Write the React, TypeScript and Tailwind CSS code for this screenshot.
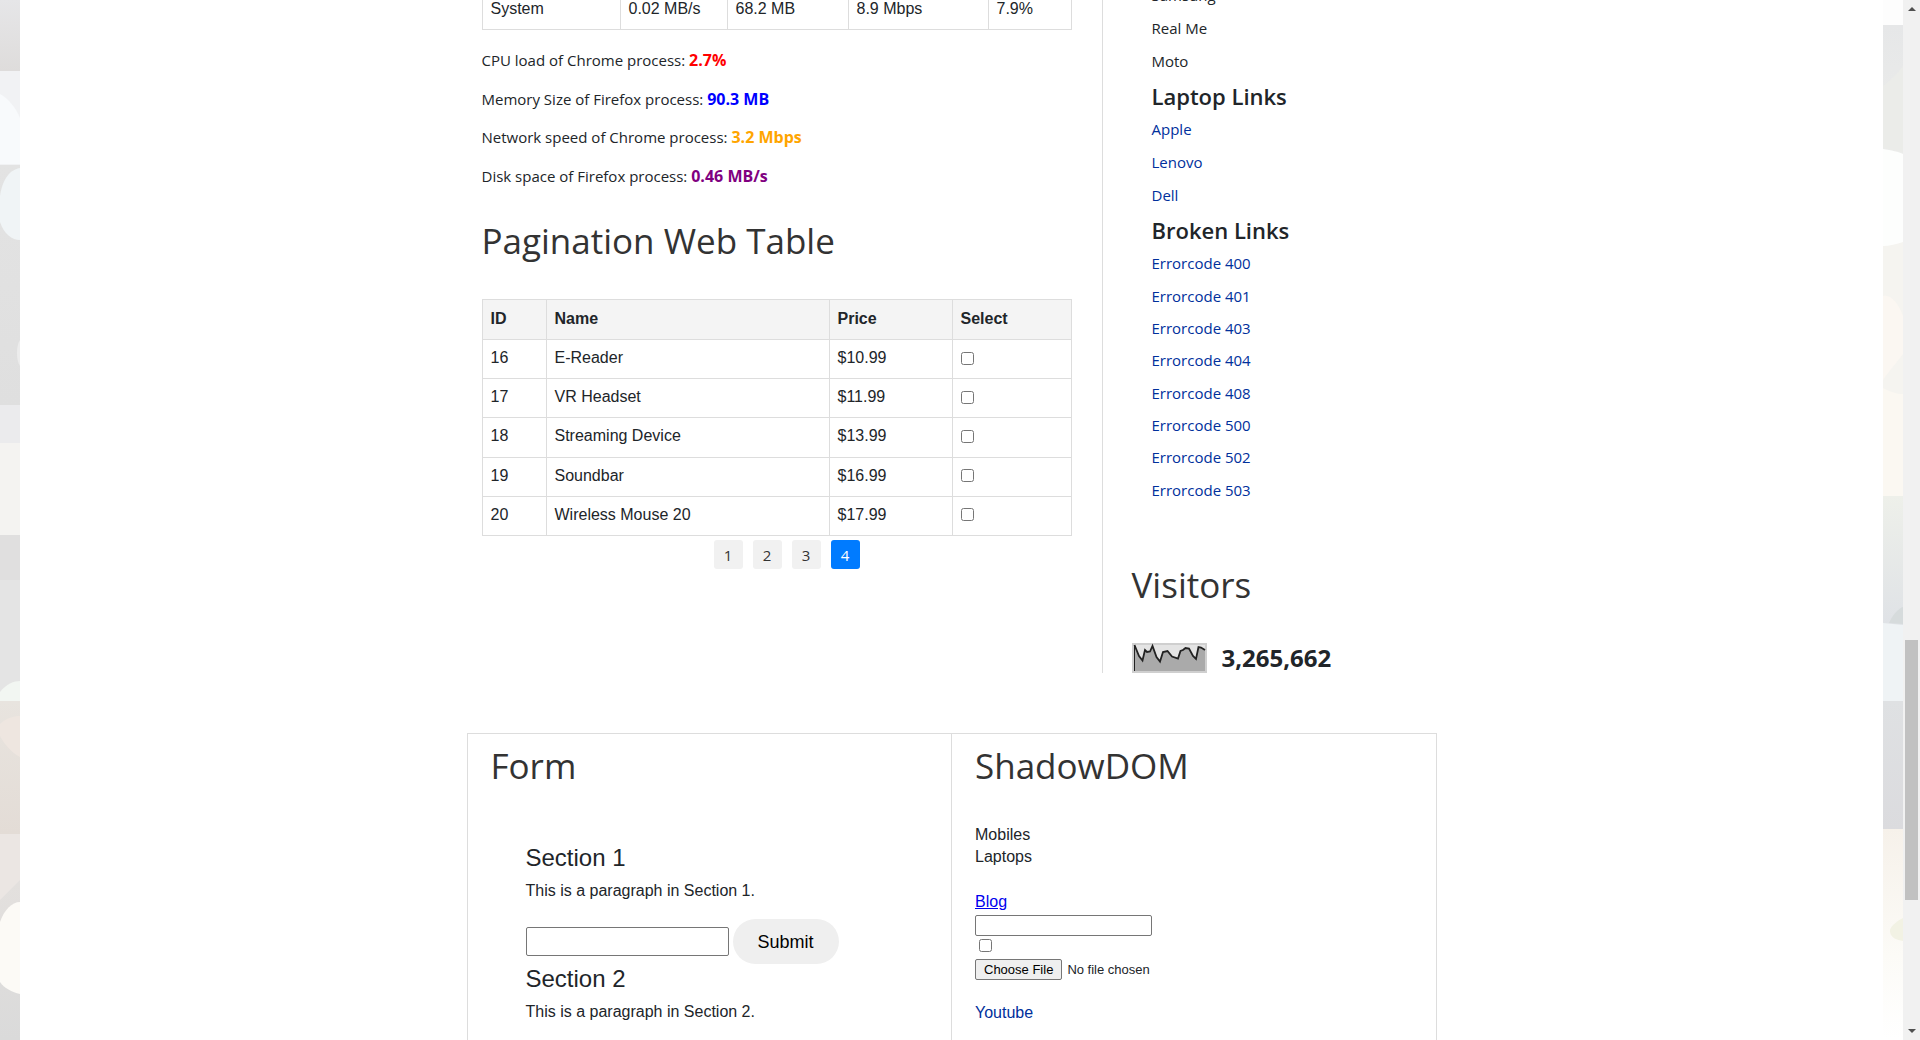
import React from "react";

const heading = "font-['Open_Sans',sans-serif] text-[35px] leading-[48px] text-[#333]";

const metrics = [
  { label: "CPU load of Chrome process:", value: "2.7%", color: "text-[#ff0000]" },
  { label: "Memory Size of Firefox process:", value: "90.3 MB", color: "text-[#0000ff]" },
  { label: "Network speed of Chrome process:", value: "3.2 Mbps", color: "text-[#ffa500]" },
  { label: "Disk space of Firefox process:", value: "0.46 MB/s", color: "text-[#800080]" },
];

const products = [
  { id: 16, name: "E-Reader", price: "$10.99" },
  { id: 17, name: "VR Headset", price: "$11.99" },
  { id: 18, name: "Streaming Device", price: "$13.99" },
  { id: 19, name: "Soundbar", price: "$16.99" },
  { id: 20, name: "Wireless Mouse 20", price: "$17.99" },
];

const errorCodes = [400, 401, 403, 404, 408, 500, 502, 503];

function LeftBackdrop() {
  return (
    <svg className="h-full w-5 shrink-0" viewBox="0 0 20 1040" preserveAspectRatio="none" aria-hidden="true">
      <defs>
        <linearGradient id="l1" x1="0" y1="0" x2="0" y2="1">
          <stop offset="0" stopColor="#e6e6e8" />
          <stop offset="1" stopColor="#dedcdb" />
        </linearGradient>
        <linearGradient id="l2" x1="0" y1="0" x2="0" y2="1">
          <stop offset="0" stopColor="#e3e3e3" />
          <stop offset="1" stopColor="#dfdfdf" />
        </linearGradient>
        <linearGradient id="l3" x1="0" y1="0" x2="0" y2="1">
          <stop offset="0" stopColor="#e8e4df" />
          <stop offset="1" stopColor="#e3dcd6" />
        </linearGradient>
        <linearGradient id="l4" x1="0" y1="0" x2="0" y2="1">
          <stop offset="0" stopColor="#e6e2df" />
          <stop offset="1" stopColor="#dadada" />
        </linearGradient>
      </defs>
      <rect width="20" height="71" fill="url(#l1)" />
      <rect y="71" width="20" height="95" fill="#f1f2f4" />
      <path d="M0 94C8 98 16 108 20 118V164H0Z" fill="#f8fafc" />
      <rect y="165" width="20" height="240" fill="url(#l2)" />
      <path d="M20 168C8 170 2 182 0 196V222C4 234 12 240 20 240Z" fill="#f0f4f6" />
      <path d="M20 340C16 346 16 360 20 366Z" fill="#ececec" />
      <rect y="405" width="20" height="38" fill="#ebebed" />
      <rect y="443" width="20" height="92" fill="#f4f3f1" />
      <rect y="535" width="20" height="45" fill="#e0dfdf" />
      <rect y="580" width="20" height="121" fill="#e4e4e4" />
      <path d="M0 692C6 684 14 681 20 681V701H0Z" fill="#f2f6f2" />
      <rect y="701" width="20" height="133" fill="url(#l3)" />
      <path d="M0 724C6 718 14 716 20 716V757C12 753 4 744 0 736Z" fill="#eee6e0" />
      <rect y="834" width="20" height="206" fill="url(#l4)" />
      <path d="M0 834H20V880L0 900Z" fill="#ebe6e3" />
      <path d="M0 922C4 910 12 902 20 902V994C12 992 4 988 0 982Z" fill="#fcfaf6" />
    </svg>
  );
}

function RightBackdrop() {
  return (
    <svg className="h-full w-5 shrink-0" viewBox="0 0 20 1040" preserveAspectRatio="none" aria-hidden="true">
      <defs>
        <linearGradient id="r1" x1="0" y1="0" x2="0" y2="1">
          <stop offset="0" stopColor="#e6e7e8" />
          <stop offset="1" stopColor="#ecedeb" />
        </linearGradient>
        <linearGradient id="r2" x1="0" y1="0" x2="0" y2="1">
          <stop offset="0" stopColor="#eef0ea" />
          <stop offset="1" stopColor="#dfe2e6" />
        </linearGradient>
        <linearGradient id="r3" x1="0" y1="0" x2="0" y2="1">
          <stop offset="0" stopColor="#dfe1e3" />
          <stop offset="1" stopColor="#dbdbde" />
        </linearGradient>
        <linearGradient id="r4" x1="0" y1="0" x2="0" y2="1">
          <stop offset="0" stopColor="#f6f1ea" />
          <stop offset="0.6" stopColor="#fcfbf7" />
          <stop offset="1" stopColor="#ffffff" />
        </linearGradient>
      </defs>
      <rect width="20" height="1040" fill="#fdfdfd" />
      <rect y="25" width="20" height="130" fill="url(#r1)" />
      <path d="M0 86C8 80 16 72 20 66V152L0 148Z" fill="#ebece9" />
      <path d="M0 149C8 150 16 152 20 154V242C14 244 6 246 0 246Z" fill="#fdfefd" />
      <path d="M0 246C6 246 14 244 20 242V500H0Z" fill="#f5f4f0" />
      <path d="M0 296C8 294 16 304 20 316V354C14 362 4 374 0 380Z" fill="#fbf7f2" />
      <path d="M0 388C8 392 14 394 20 394V500H0Z" fill="#fbf8f2" />
      <rect y="496" width="20" height="129" fill="url(#r2)" />
      <path d="M6 623C10 614 16 608 20 607V624Z" fill="#d6dbdc" />
      <path d="M0 623L20 625V701H0Z" fill="#eff3f5" />
      <rect y="701" width="20" height="130" fill="url(#r3)" />
      <rect y="829" width="20" height="211" fill="url(#r4)" />
      <path d="M20 918C12 922 6 928 7 932C8 938 14 940 20 941Z" fill="#f2f2e4" />
    </svg>
  );
}

function PageScrollbar() {
  return (
    <div className="flex h-full w-[17px] shrink-0 flex-col items-center bg-[#f1f1f1] py-[6px]" aria-hidden="true">
      <svg className="h-1.5 w-2" viewBox="0 0 8 6"><path d="M4 1L8 5H0Z" fill="#505050" /></svg>
      <div className="grow-[628]" />
      <div className="w-[13px] grow-[260] bg-[#c1c1c1]" />
      <div className="grow-[128]" />
      <svg className="h-1.5 w-2" viewBox="0 0 8 6"><path d="M4 5L0 1H8Z" fill="#505050" /></svg>
    </div>
  );
}

const cell = "border border-[#ddd] px-2 pb-[2px] text-left";

function LeftColumn() {
  return (
    <section className="min-w-0 flex-1 pl-[15px] pr-[30px]">
      <table className="-mt-[11px] h-[41px] w-full table-fixed border-collapse font-['Liberation_Sans',Arial,sans-serif] text-base">
        <tbody>
          <tr>
            <td className={`${cell} w-[138px]`}>System</td>
            <td className={`${cell} w-[107px]`}>0.02 MB/s</td>
            <td className={`${cell} w-[121px]`}>68.2 MB</td>
            <td className={`${cell} w-[140px]`}>8.9 Mbps</td>
            <td className={cell}>7.9%</td>
          </tr>
        </tbody>
      </table>
      <div className="mt-[11px] grid h-[154px] grid-rows-4 items-center">
        {metrics.map((m) => (
          <p key={m.label}>
            {m.label} <strong className={`text-base leading-[22px] font-bold ${m.color}`}>{m.value}</strong>
          </p>
        ))}
      </div>
      <h2 className={`${heading} mt-[22px]`}>Pagination Web Table</h2>
      <table className="mt-[34px] h-[237px] w-full table-fixed border-collapse font-['Liberation_Sans',Arial,sans-serif] text-base">
        <thead className="bg-[#f4f4f4] font-bold">
          <tr className="h-10">
            <th className={`${cell} w-16`}>ID</th>
            <th className={`${cell} w-[283px]`}>Name</th>
            <th className={`${cell} w-[123px]`}>Price</th>
            <th className={cell}>Select</th>
          </tr>
        </thead>
        <tbody>
          {products.map((p) => (
            <tr key={p.id}>
              <td className={cell}>{p.id}</td>
              <td className={cell}>{p.name}</td>
              <td className={cell}>{p.price}</td>
              <td className={cell}>
                <input type="checkbox" aria-label={`Select ${p.name}`} className="block" />
              </td>
            </tr>
          ))}
        </tbody>
      </table>
      <ul className="mt-1 flex justify-center gap-[10px] pl-5">
        {[1, 2, 3, 4].map((n) => (
          <li key={n}>
            <a
              href="#"
              className={`flex size-[29px] items-center justify-center rounded-[3px] ${
                n === 4 ? "bg-[#007bff] text-white" : "bg-[#f1f1f1] text-[#333]"
              }`}
            >
              {n}
            </a>
          </li>
        ))}
      </ul>
    </section>
  );
}

function Sidebar() {
  const link = "text-[#00309c]";
  const title = "pt-[2px] text-[22px] leading-[34px] font-semibold";
  return (
    <aside className="w-[335px] border-l border-[#ddd] pl-[29px]">
      <div className="pl-5">
        <ul className="-mt-[21px] grid h-[98px] grid-rows-3 items-center">
          <li>Samsung</li>
          <li>Real Me</li>
          <li>Moto</li>
        </ul>
        <h3 className={title}>Laptop Links</h3>
        <ul className="grid h-[98px] grid-rows-3 items-center">
          {["Apple", "Lenovo", "Dell"].map((t) => (
            <li key={t}><a href="#" className={link}>{t}</a></li>
          ))}
        </ul>
        <h3 className={title}>Broken Links</h3>
        <ul className="grid h-[259px] grid-rows-8 items-center">
          {errorCodes.map((c) => (
            <li key={c}><a href="#" className={link}>Errorcode {c}</a></li>
          ))}
        </ul>
      </div>
      <h2 className={`${heading} mt-[55px]`}>Visitors</h2>
      <div className="mt-[34px] flex gap-[15px]">
        <svg className="h-[30px] w-[75px]" viewBox="0 0 75 30" role="img" aria-label="Visitors per day">
          <rect width="75" height="30" fill="#cfcfcf" />
          <rect x="2" y="2" width="71" height="26" fill="#e4e4e4" />
          <path d="M2 2L7 14L10 17L13 7L15 9L18 9L21 3L25 15L28 19L31 9L36 8L41 14L46 15L48 8L53 5L57 6L61 13L64 16L66 4L68 4L73 7V28H2Z" fill="#aaa" />
          <path d="M2.500 28V2" fill="none" stroke="#222" />
          <path d="M2.500 2L7 13L10.500 17.500L13 7L15 9L18 8.500L20.500 3L24.500 14L28 18.500L31 9L35.500 8L40 13.500L46 15.500L48.500 8L51 7L53.500 5L57 5.500L61 13L64 16L66.500 4L69 4.500L73 7" fill="none" stroke="#222" strokeWidth="1.800" />
        </svg>
        <span className="text-2xl leading-[30px] font-bold">3,265,662</span>
      </div>
    </aside>
  );
}

function FormPanel() {
  return (
    <section className="flex-1 border-r border-[#ddd] pl-[23px] pt-2">
      <h2 className={heading}>Form</h2>
      <form className="pl-[35px] pt-[53px] font-['Liberation_Sans',Arial,sans-serif] text-base" onSubmit={(e) => e.preventDefault()}>
        <h3 className="text-2xl leading-[29px]">Section 1</h3>
        <p className="mt-2 leading-[22px]">This is a paragraph in Section 1.</p>
        <div className="mt-[17px] flex items-center gap-1">
          <input type="text" aria-label="Section 1 input" className="h-[29px] w-[203px] rounded-[2px] border border-[#767676] bg-white" />
          <button type="submit" className="h-[45px] rounded-full bg-[#efefef] px-[25px] text-lg text-black">Submit</button>
        </div>
        <h3 className="text-2xl leading-[29px]">Section 2</h3>
        <p className="mt-2 leading-[22px]">This is a paragraph in Section 2.</p>
      </form>
    </section>
  );
}

function ShadowPanel() {
  return (
    <section className="flex-1 pl-[23px] pt-2">
      <h2 className={heading}>ShadowDOM</h2>
      <div className="flex flex-col items-start pt-[34px] font-['Liberation_Sans',Arial,sans-serif] text-base leading-[22px]">
        <span>Mobiles</span>
        <span>Laptops</span>
        <a href="#" className="mt-[23px] text-[#0000ee] underline">Blog</a>
        <input type="text" aria-label="Blog input" className="mt-[2px] h-[21px] w-[177px] rounded-[2px] border border-[#767676] bg-white" />
        <input type="checkbox" aria-label="Blog option" className="ml-1 mt-[3px]" />
        <input
          type="file"
          aria-label="Choose a file"
          className="mt-[7px] h-[21px] w-[253px] text-[13px] leading-[15px] file:me-[5px] file:h-[21px] file:rounded-[2px] file:border file:border-solid file:border-[#767676] file:bg-[#efefef] file:px-2 file:text-black"
        />
        <a href="#" className="mt-[22px] text-[#00309c]">Youtube</a>
      </div>
    </section>
  );
}

export default function App() {
  return (
    <div className="flex h-screen overflow-hidden bg-white font-['Open_Sans','Noto_Sans',sans-serif] text-[15px] leading-[22px] text-[#212529]">
      <LeftBackdrop />
      <main className="h-full min-w-0 flex-1 overflow-hidden">
        <div className="mx-auto flow-root max-w-[970px]">
          <div className="flex">
            <LeftColumn />
            <Sidebar />
          </div>
          <div className="mt-[60px] flex min-h-[400px] border border-[#ddd]">
            <FormPanel />
            <ShadowPanel />
          </div>
        </div>
      </main>
      <RightBackdrop />
      <PageScrollbar />
    </div>
  );
}
